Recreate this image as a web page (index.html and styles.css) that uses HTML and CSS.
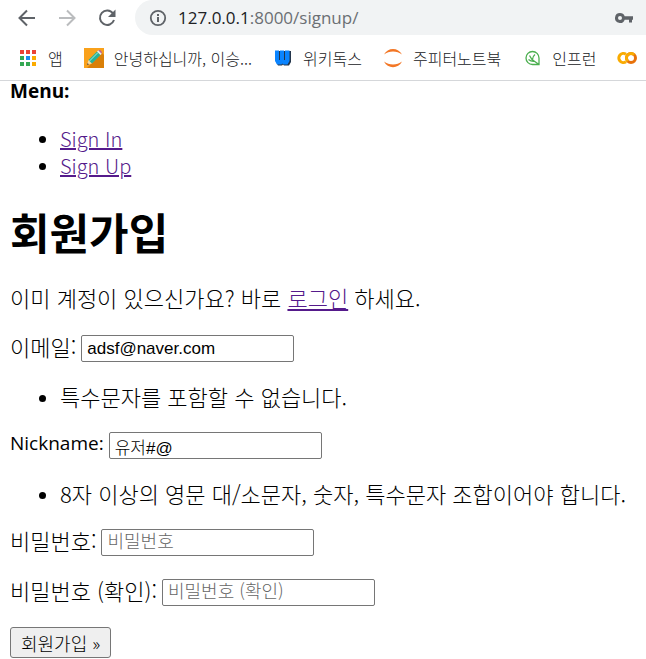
FILE: index.html
```html
<!DOCTYPE html>
<html lang="ko">
<head>
    <meta charset="UTF-8">
    <meta name="viewport" content="width=device-width, initial-scale=1.0">
    <title>회원가입</title>
    <link rel="stylesheet" href="styles.css">
</head>
<body>

<!-- Browser toolbar -->
<header class="browser">
    <div class="toolbar">
        <button type="button" class="nav-btn" aria-label="뒤로">
            <svg width="20" height="20" viewBox="0 0 20 20" fill="none" stroke="#5f6368" stroke-width="2"><path d="M18 10H3M10 2.500L2.500 10l7.500 7.500"/></svg>
        </button>
        <button type="button" class="nav-btn" aria-label="앞으로">
            <svg width="20" height="20" viewBox="0 0 20 20" fill="none" stroke="#babcbe" stroke-width="2"><path d="M2 10h15M10 2.500l7.500 7.500-7.500 7.500"/></svg>
        </button>
        <button type="button" class="nav-btn" aria-label="새로고침">
            <svg width="20" height="20" viewBox="0 0 20 20"><path d="M16 5.500A7.200 7.200 0 1 0 17 12" fill="none" stroke="#5f6368" stroke-width="2"/><path d="M18.500 1.500v7.500H11z" fill="#5f6368"/></svg>
        </button>
        <div class="address">
            <svg width="18" height="18" viewBox="0 0 18 18"><circle cx="9" cy="9" r="7.200" fill="none" stroke="#5f6368" stroke-width="1.800"/><path d="M8 8h2v5H8zM8 5h2v2H8z" fill="#5f6368"/></svg>
            <span class="url">127.0.0.1<span class="path">:8000/signup/</span></span>
            <svg width="18" height="12" viewBox="0 0 18 12" fill="#5f6368"><path fill-rule="evenodd" d="M5 1a5 5 0 1 0 4.700 6.700H14V10.500h3V7.700h1V4.300H9.700A5 5 0 0 0 5 1zm0 3a2 2 0 1 1 0 4 2 2 0 0 1 0-4z"/></svg>
        </div>
    </div>
    <nav class="bookmarks">
        <a href="#">
            <svg width="20" height="20" viewBox="0 0 20 20"><path fill="#ea4335" d="M2 2h4v4H2zM8 2h4v4H8zM14 2h4v4h-4z"/><path fill="#34a853" d="M2 8h4v4H2zM2 14h4v4H2zM8 14h4v4H8z"/><path fill="#1a8cf0" d="M8 8h4v4H8z"/><path fill="#fbab00" d="M14 8h4v4h-4zM14 14h4v4h-4z"/></svg>
            앱
        </a>
        <a href="#">
            <svg width="20" height="20" viewBox="0 0 20 20"><path fill="#f9a11b" d="M0 0h20v20H0z"/><path fill="#d97f08" d="M18 5l2 2v13H3z"/><path fill="#f5d7a0" d="M3 17l1.500-5 3.500 3.500z"/><path fill="#5b4630" d="M3 17l.6-2 1.400 1.400z"/><path fill="#24b39b" d="M4.500 12L13 3.500l3.500 3.500L8 15.500z"/><path stroke="#a9ead8" d="M5.500 13L14 4.500"/><path fill="#e4eef0" d="M13 3.500l1.300-1.300 3.500 3.500L16.500 7z"/><path fill="#b35aa8" d="M14.300 2.200q1.200-.8 2.400.4 1.600 1.500 1.100 3.100z"/></svg>
            안녕하십니까, 이승...
        </a>
        <a href="#">
            <svg width="20" height="20" viewBox="0 0 20 20"><path fill="#24364c" d="M3 3h15v11l-2 3.500h-5l-1-1-1 1H5l-2-3.500z"/><path fill="#0a84ff" d="M2 2.500h4V12h1V2.500h4V12h1V2.500h4.500V13l-2 3.500h-4l-1-1-1 1H4L2 13z"/></svg>
            위키독스
        </a>
        <a href="#">
            <svg width="20" height="20" viewBox="0 0 20 20" fill="#f37726"><path d="M1 6.500C4.500-1 15.500-1 19 6.500 14 2.500 6 2.500 1 6.500zM1 13.500c3.500 7.500 14.500 7.500 18 0-5 4-13 4-18 0z"/></svg>
            주피터노트북
        </a>
        <a href="#">
            <svg width="20" height="20" viewBox="0 0 20 20" fill="none" stroke="#4caf50" stroke-width="1.300"><path d="M17 16.500h-6.500A6.500 6.500 0 1 1 17 10zM7.500 7.500l2.500 4 7 5M6.500 11.500q3 2.500 6.500 1.800M10.500 11.500q0-3 2.500-5"/></svg>
            인프런
        </a>
        <a href="#" aria-label="Colab">
            <svg width="20" height="14" viewBox="0 0 20 14" fill="none" stroke-width="3"><path stroke="#f9ab00" d="M9 3.200A4.600 4.600 0 1 0 9 10.800"/><circle cx="14" cy="7" r="4.500" stroke="#e8710a"/><path stroke="#f9ab00" d="M10.800 10.200A4.500 4.500 0 0 1 17.200 3.800"/></svg>
        </a>
    </nav>
</header>

<main class="page">
    <strong class="menu-title">Menu:</strong>
    <ul class="menu">
        <li><a href="#">Sign In</a></li>
        <li><a href="#">Sign Up</a></li>
    </ul>

    <h1>회원가입</h1>
    <p>이미 계정이 있으신가요? 바로 <a href="#">로그인</a> 하세요.</p>

    <form>
        <div class="field">
            <label for="email">이메일:</label>
            <input type="email" id="email" name="email" value="adsf@naver.com">
        </div>
        <ul>
            <li>특수문자를 포함할 수 없습니다.</li>
        </ul>
        <div class="field">
            <label for="nickname" class="latin">Nickname:</label>
            <input type="text" id="nickname" name="nickname" value="유저#@">
        </div>
        <ul>
            <li>8자 이상의 영문 대/소문자, 숫자, 특수문자 조합이어야 합니다.</li>
        </ul>
        <div class="field">
            <label for="password1">비밀번호:</label>
            <input type="password" id="password1" name="password1" placeholder="비밀번호">
        </div>
        <div class="field">
            <label for="password2">비밀번호 (확인):</label>
            <input type="password" id="password2" name="password2" placeholder="비밀번호 (확인)">
        </div>
        <button type="submit" class="submit-btn">회원가입 »</button>
    </form>
</main>

</body>
</html>
```

FILE: styles.css
```css
* {
    box-sizing: border-box;
}
body {
    margin: 0;
    background-color: #fff;
    color: #000;
    font-family: "Noto Sans CJK KR", sans-serif;
    font-size: 22px;
    font-weight: 300;
    line-height: 27px;
    overflow: hidden;
}
svg {
    display: block;
    flex: none;
}

/* Browser toolbar */
.browser {
    border-bottom: 1px solid #d5d7da;
}
.toolbar {
    display: flex;
    align-items: center;
    height: 35px;
    padding-left: 17px;
    gap: 20px;
}
.nav-btn {
    padding: 0;
    border: none;
    background: none;
}
.address {
    display: flex;
    flex: 1;
    align-items: center;
    align-self: stretch;
    gap: 11px;
    margin-left: -2px;
    padding: 0 13px 0 14px;
    border-radius: 18px 0 0 18px;
    background-color: #f1f3f4;
}
.url {
    flex: 1;
    color: #202124;
    font-family: "Open Sans", sans-serif;
    font-size: 17px;
    font-weight: 400;
}
.path {
    color: #6b6f73;
}
.bookmarks {
    display: flex;
    align-items: center;
    height: 45px;
    padding-left: 18px;
    gap: 21px;
    overflow: hidden;
}
.bookmarks a {
    display: flex;
    flex: none;
    align-items: center;
    gap: 10px;
    color: #202124;
    font-size: 16px;
    line-height: 24px;
    text-decoration: none;
}

/* Page */
.page {
    padding: 0 10px;
}
.menu-title {
    display: block;
    font-family: "Open Sans", sans-serif;
    font-size: 19px;
    font-weight: 700;
    line-height: 20px;
}
ul {
    margin: 20px 0;
    padding-left: 50px;
}
li::marker {
    font-size: 18px;
}
.menu {
    margin: 24px 0 26px;
    font-size: 20px;
}
.latin {
    font-family: "Open Sans", sans-serif;
    font-size: 19px;
    font-weight: 400;
}
.page a {
    color: #551a8b;
    text-decoration: underline;
}
h1 {
    margin: 26px 0;
    font-size: 43px;
    font-weight: 700;
    line-height: 53px;
}
p {
    margin: 20px 0 22px;
}
.field {
    display: flex;
    align-items: center;
    gap: 5px;
    height: 30px;
    margin: 20px 0;
}
.field label {
    padding-bottom: 4px;
}
.field input {
    width: 213px;
    height: 27px;
    padding: 3px 5px 1px;
    border: 1px solid #767676;
    border-radius: 2px;
    background-color: #fff;
    color: #000;
    font-family: "Liberation Sans", "Noto Sans CJK KR", sans-serif;
    font-size: 17px;
    font-weight: 300;
}
.field input::placeholder {
    color: #666;
    font-family: "Noto Sans CJK KR", sans-serif;
    font-size: 18px;
}
.submit-btn {
    height: 31px;
    padding: 0 10px;
    border: 1px solid #767676;
    border-radius: 3px;
    background-color: #efefef;
    color: #000;
    font-family: "Noto Sans CJK KR", sans-serif;
    font-size: 18px;
    font-weight: 300;
}
```
